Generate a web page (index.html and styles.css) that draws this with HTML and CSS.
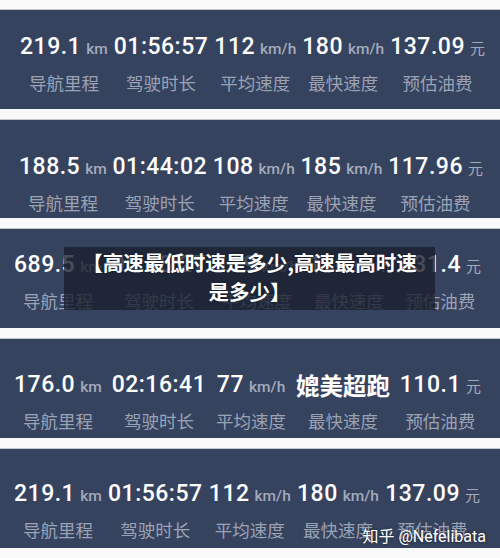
FILE: index.html
```html
<!DOCTYPE html>
<html lang="zh-CN">
<head>
    <meta charset="UTF-8">
    <meta name="viewport" content="width=device-width, initial-scale=1.0">
    <title>高速最低时速是多少,高速最高时速是多少</title>
    <link rel="stylesheet" href="styles.css">
</head>
<body>
    <div class="panel panel-1">
        <div class="stats">
            <div class="stat"><div class="val">219.1<span class="unit">km</span></div><div class="label">导航里程</div></div>
            <div class="stat"><div class="val">01:56:57</div><div class="label">驾驶时长</div></div>
            <div class="stat"><div class="val">112<span class="unit">km/h</span></div><div class="label">平均速度</div></div>
            <div class="stat"><div class="val">180<span class="unit">km/h</span></div><div class="label">最快速度</div></div>
            <div class="stat"><div class="val">137.09<span class="unit cn">元</span></div><div class="label">预估油费</div></div>
        </div>
    </div>

    <div class="panel panel-2">
        <div class="stats">
            <div class="stat"><div class="val">188.5<span class="unit">km</span></div><div class="label">导航里程</div></div>
            <div class="stat"><div class="val">01:44:02</div><div class="label">驾驶时长</div></div>
            <div class="stat"><div class="val">108<span class="unit">km/h</span></div><div class="label">平均速度</div></div>
            <div class="stat"><div class="val">185<span class="unit">km/h</span></div><div class="label">最快速度</div></div>
            <div class="stat"><div class="val">117.96<span class="unit cn">元</span></div><div class="label">预估油费</div></div>
        </div>
    </div>

    <div class="panel panel-3">
        <div class="stats">
            <div class="stat"><div class="val">689.5<span class="unit">km</span></div><div class="label">导航里程</div></div>
            <div class="stat"><div class="val">05:48:27</div><div class="label">驾驶时长</div></div>
            <div class="stat"><div class="val">119<span class="unit">km/h</span></div><div class="label">平均速度</div></div>
            <div class="stat"><div class="val">176<span class="unit">km/h</span></div><div class="label">最快速度</div></div>
            <div class="stat"><div class="val">431.4<span class="unit cn">元</span></div><div class="label">预估油费</div></div>
        </div>
    </div>

    <div class="panel panel-4">
        <div class="stats">
            <div class="stat"><div class="val">176.0<span class="unit">km</span></div><div class="label">导航里程</div></div>
            <div class="stat"><div class="val">02:16:41</div><div class="label">驾驶时长</div></div>
            <div class="stat"><div class="val">77<span class="unit">km/h</span></div><div class="label">平均速度</div></div>
            <div class="stat"><div class="val cn-val">媲美超跑</div><div class="label">最快速度</div></div>
            <div class="stat"><div class="val">110.1<span class="unit cn">元</span></div><div class="label">预估油费</div></div>
        </div>
    </div>

    <div class="panel panel-5">
        <div class="stats">
            <div class="stat"><div class="val">219.1<span class="unit">km</span></div><div class="label">导航里程</div></div>
            <div class="stat"><div class="val">01:56:57</div><div class="label">驾驶时长</div></div>
            <div class="stat"><div class="val">112<span class="unit">km/h</span></div><div class="label">平均速度</div></div>
            <div class="stat"><div class="val">180<span class="unit">km/h</span></div><div class="label">最快速度</div></div>
            <div class="stat"><div class="val">137.09<span class="unit cn">元</span></div><div class="label">预估油费</div></div>
        </div>
    </div>

    <!-- 标题遮罩 -->
    <div class="title-box">【高速最低时速是多少,高速最高时速<br>是多少】</div>
    <div class="watermark">知乎 @Nefelibata</div>
</body>
</html>
```

FILE: styles.css
```css
body {
    margin: 0;
    padding-top: 9px;
    height: 558px;
    box-sizing: border-box;
    overflow: hidden;
    position: relative;
    background-color: #f9f9f9;
    font-family: Roboto, "Noto Sans CJK SC", sans-serif;
}
.panel {
    background-color: #36435f;
    border-top: 1px solid #c3c7cf;
    height: 100px;
    margin-bottom: 10px;
    box-sizing: border-box;
}
.panel-1 { padding: 23px 15px 0 20px; }
.panel-2 { padding: 33px 17px 0 19px; height: 99px; }
.panel-3 { padding: 22px 19px 0 14px; }
.panel-4 { padding: 32px 19px 0 14px; }
.panel-5 { padding: 31px 20px 0 14px; }
.stats {
    display: flex;
    justify-content: space-between;
}
.stat {
    display: flex;
    flex-direction: column;
    align-items: center;
}
.val {
    color: #fff;
    font-size: 23px;
    font-weight: 500;
    line-height: 28px;
    height: 28px;
    letter-spacing: 0.5px;
    white-space: nowrap;
}
.cn-val {
    font-family: "Noto Sans CJK SC", sans-serif;
    font-size: 23.5px;
    font-weight: 700;
    letter-spacing: 0;
}
.unit {
    font-size: 15.5px;
    font-weight: 500;
    color: #a3aabb;
    letter-spacing: 0;
    margin-left: 5px;
}
.unit.cn {
    font-family: "Noto Sans CJK SC", sans-serif;
    font-weight: 400;
    font-size: 15px;
}
.label {
    margin-top: 10px;
    font-family: "Noto Sans CJK SC", sans-serif;
    font-size: 17.5px;
    line-height: 24px;
    color: #9aa2b4;
    white-space: nowrap;
}
/* 标题遮罩 */
.title-box {
    position: absolute;
    left: 64px;
    top: 247px;
    width: 371px;
    height: 63px;
    box-sizing: border-box;
    padding-top: 1px;
    background-color: rgba(25, 31, 46, 0.8);
    color: #fff;
    font-family: "Noto Sans CJK SC", sans-serif;
    font-size: 20.5px;
    font-weight: 700;
    line-height: 29px;
    text-align: center;
    text-shadow: 0 0 2px rgba(0, 0, 0, 0.5);
}
.watermark {
    position: absolute;
    right: 14px;
    bottom: 11px;
    color: #fff;
    font-family: Roboto, "Noto Sans CJK SC", sans-serif;
    font-size: 16px;
    line-height: 20px;
    text-shadow: 0 0 3px rgba(0, 0, 0, 0.6);
}
```
